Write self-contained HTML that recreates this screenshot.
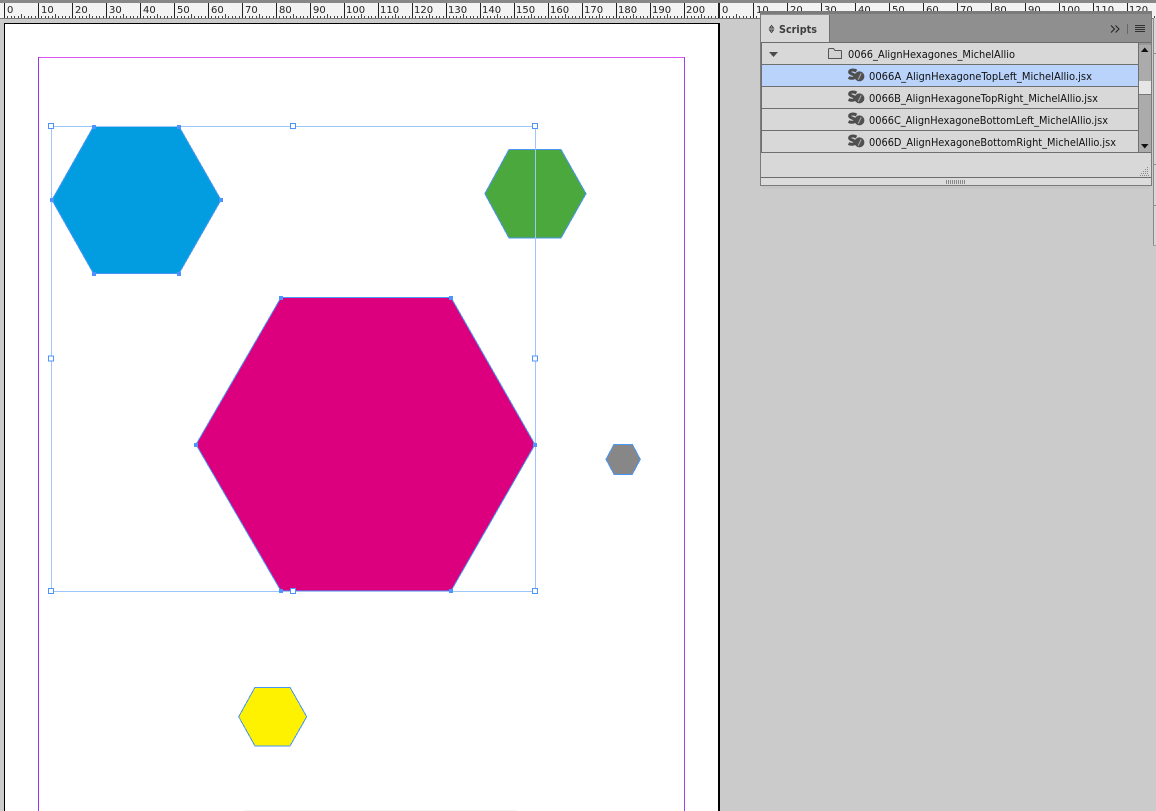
<!DOCTYPE html>
<html lang="en">
<head>
<meta charset="utf-8">
<title>Scripts</title>
<style>
html,body{margin:0;padding:0;width:1156px;height:811px;overflow:hidden;background:#cbcbcb}
svg{display:block;position:absolute;left:0;top:0}
text{font-family:"DejaVu Sans","Liberation Sans",sans-serif}
</style>
</head>
<body>
<svg width="1156" height="811" viewBox="0 0 1156 811" xmlns="http://www.w3.org/2000/svg">
<defs>
<pattern id="t1" patternUnits="userSpaceOnUse" x="4" y="3" width="34" height="15">
<rect x="0" y="0" width="1" height="15" fill="#222"/>
<g fill="#444">
<rect x="3" y="13" width="1" height="2"/><rect x="7" y="13" width="1" height="2"/>
<rect x="10" y="13" width="1" height="2"/><rect x="14" y="13" width="1" height="2"/>
<rect x="17" y="11" width="1" height="4"/><rect x="20" y="13" width="1" height="2"/>
<rect x="24" y="13" width="1" height="2"/><rect x="27" y="13" width="1" height="2"/>
<rect x="31" y="13" width="1" height="2"/>
</g>
</pattern>
<pattern id="t2" patternUnits="userSpaceOnUse" x="719" y="3" width="34" height="15">
<rect x="0" y="0" width="1" height="15" fill="#222"/>
<g fill="#444">
<rect x="3" y="13" width="1" height="2"/><rect x="7" y="13" width="1" height="2"/>
<rect x="10" y="13" width="1" height="2"/><rect x="14" y="13" width="1" height="2"/>
<rect x="17" y="11" width="1" height="4"/><rect x="20" y="13" width="1" height="2"/>
<rect x="24" y="13" width="1" height="2"/><rect x="27" y="13" width="1" height="2"/>
<rect x="31" y="13" width="1" height="2"/>
</g>
</pattern>
<g id="ico">
<path d="M8.5 2 C5.5 .4 1.8 .8 1.6 3 C1.4 5.2 7.2 5 7 7.4 C6.8 9.6 3 9.8 .6 8.4" fill="none" stroke="#4d4d4d" stroke-width="3"/>
<circle cx="11.4" cy="7.4" r="5" fill="#505050"/>
<path d="M13.2 4.4 L10.2 10.6" stroke="#a8a8a8" stroke-width="1.1" fill="none"/>
</g>
</defs>

<!-- chrome + rulers -->
<rect width="1156" height="811" fill="#cbcbcb"/>
<rect width="1156" height="3" fill="#888"/>
<rect y="3" width="1156" height="15" fill="#f3f3f3"/>
<rect y="18" width="1156" height="1" fill="#777"/>
<rect y="3" x="4" width="715" height="15" fill="url(#t1)"/>
<rect y="3" x="719" width="437" height="15" fill="url(#t2)"/>
<g font-size="10" fill="#222">
<text x="7" y="13">0</text><text x="41" y="13">10</text><text x="75" y="13">20</text><text x="109" y="13">30</text><text x="143" y="13">40</text><text x="177" y="13">50</text><text x="211" y="13">60</text><text x="245" y="13">70</text><text x="279" y="13">80</text><text x="313" y="13">90</text><text x="346" y="13">100</text><text x="380" y="13">110</text><text x="414" y="13">120</text><text x="448" y="13">130</text><text x="482" y="13">140</text><text x="516" y="13">150</text><text x="550" y="13">160</text><text x="584" y="13">170</text><text x="618" y="13">180</text><text x="652" y="13">190</text><text x="686" y="13">200</text>
<text x="722" y="13">0</text><text x="756" y="13">10</text><text x="790" y="13">20</text><text x="824" y="13">30</text><text x="858" y="13">40</text><text x="892" y="13">50</text><text x="926" y="13">60</text><text x="960" y="13">70</text><text x="994" y="13">80</text><text x="1028" y="13">90</text><text x="1061" y="13">100</text><text x="1095" y="13">110</text><text x="1129" y="13">120</text>
</g>

<!-- page -->
<rect x="4" y="23" width="716" height="788" fill="#000"/>
<rect x="5" y="24" width="713" height="787" fill="#fff"/>
<rect x="244" y="810" width="273" height="1" fill="#f3f3f3"/>

<!-- margin guides -->
<rect x="38" y="57" width="647" height="1" fill="#dd55f5"/>
<rect x="38" y="57" width="1" height="754" fill="#9933f2"/>
<rect x="684" y="57" width="1" height="754" fill="#a040f0"/>

<!-- hexagons -->
<g shape-rendering="crispEdges" stroke="#4a96f5">
<polygon points="52,200 93.5,126.5 179,126.5 221,200 179,273.5 93.5,273.5" fill="#029de0"/>
<polygon points="484.8,193.7 509,149.5 561,149.5 586,193.7 561,238 509,238" fill="#4aa83c"/>
<polygon points="196,444.5 281,297.5 451,297.5 535,444.5 451,591 281,591" fill="#dc007f"/>
<polygon points="606,459.3 614,444.3 632.3,444.3 640.3,459.3 632.3,474.3 614,474.3" fill="#878787"/>
<polygon points="238.7,716.7 255,687.3 290,687.3 306.7,716.7 290,746 255,746" fill="#fff200"/>
</g>

<!-- selection frame -->
<rect x="51.5" y="126.5" width="484" height="465" fill="none" stroke="#9fc6fb"/>
<g fill="#4d94ff">
<rect x="92" y="125" width="4" height="4"/><rect x="177" y="125" width="4" height="4"/>
<rect x="50" y="198" width="4" height="4"/><rect x="219" y="198" width="4" height="4"/>
<rect x="92" y="272" width="4" height="4"/><rect x="177" y="272" width="4" height="4"/>
<rect x="279" y="296" width="4" height="4"/><rect x="449" y="296" width="4" height="4"/>
<rect x="194" y="443" width="4" height="4"/><rect x="533" y="443" width="4" height="4"/>
<rect x="279" y="589" width="4" height="4"/><rect x="449" y="589" width="4" height="4"/>
</g>
<g fill="#fff" stroke="#4d94ff">
<rect x="48.5" y="123.5" width="5" height="5"/><rect x="290.5" y="123.5" width="5" height="5"/><rect x="532.5" y="123.5" width="5" height="5"/>
<rect x="48.5" y="356" width="5" height="5"/><rect x="532.5" y="356" width="5" height="5"/>
<rect x="48.5" y="588.5" width="5" height="5"/><rect x="290.5" y="588.5" width="5" height="5"/><rect x="532.5" y="588.5" width="5" height="5"/>
</g>

<!-- right edge behind panel -->
<rect x="1154" y="18" width="2" height="227" fill="#d8d8d8"/>
<rect x="1153" y="18" width="1" height="227" fill="#8a8a8a"/>
<rect x="1153" y="53" width="3" height="1" fill="#8a8a8a"/>
<rect x="1153" y="164" width="3" height="1" fill="#8a8a8a"/>
<rect x="1153" y="205" width="3" height="1" fill="#8a8a8a"/>
<rect x="1153" y="245" width="3" height="1" fill="#a0a0a0"/>

<!-- panel shadow -->
<rect x="762" y="186" width="388" height="3" fill="#c6c6c6"/>

<!-- panel -->
<rect x="760" y="11" width="392" height="175" fill="#7b7b7b"/>
<rect x="761" y="14" width="390" height="28" fill="#8f8f8f"/>
<rect x="761" y="15" width="68" height="28" fill="#d8d8d8"/>
<rect x="829" y="15" width="1" height="27" fill="#6f6f6f"/>
<rect x="761" y="42" width="390" height="1" fill="#6c6c6c"/>
<path d="M771.5 25.5 L769.5 28 H773.5 Z M769.5 30 H773.5 L771.5 32.5 Z" fill="none" stroke="#333" stroke-width=".9"/>
<text x="779" y="33" font-size="11" font-weight="bold" fill="#3d3d3d" textLength="38" lengthAdjust="spacingAndGlyphs">Scripts</text>

<path d="M1111 25.5 L1114.5 29 L1111 32.5 M1115.5 25.5 L1119 29 L1115.5 32.5" fill="none" stroke="#222" stroke-width="1"/>
<rect x="1127" y="24" width="1" height="10" fill="#666"/>
<g fill="#333">
<rect x="1135" y="25" width="10" height="1"/><rect x="1135" y="27" width="10" height="1"/><rect x="1135" y="29" width="10" height="1"/><rect x="1135" y="31" width="10" height="1"/>
</g>

<!-- list -->
<rect x="761" y="43" width="390" height="142" fill="#d8d8d8"/>
<rect x="762" y="65" width="377" height="22" fill="#b9d3fa"/>
<g fill="#6f6f6f">
<rect x="761" y="64" width="378" height="1"/>
<rect x="761" y="86" width="378" height="1"/>
<rect x="761" y="108" width="378" height="1"/>
<rect x="761" y="130" width="378" height="1"/>
<rect x="761" y="152" width="390" height="1"/>
<rect x="761" y="43" width="1" height="110"/>
<rect x="1138" y="43" width="1" height="110"/>
</g>

<!-- list contents -->
<polygon points="769,52 778,52 773.5,57" fill="#4a4a4a"/>
<path d="M828.5 58.5 V49.5 Q828.5 48.5 829.5 48.5 H833.5 L835 50.5 H841 Q841.5 50.5 841.5 51.5 V58.5 Z" fill="#d2d2d2" stroke="#555"/>
<g font-size="11" fill="#111">
<text x="848" y="58" textLength="167" lengthAdjust="spacingAndGlyphs">0066_AlignHexagones_MichelAllio</text>
<text x="869" y="80" textLength="223" lengthAdjust="spacingAndGlyphs">0066A_AlignHexagoneTopLeft_MichelAllio.jsx</text>
<text x="869" y="102" textLength="229" lengthAdjust="spacingAndGlyphs">0066B_AlignHexagoneTopRight_MichelAllio.jsx</text>
<text x="869" y="124" textLength="239" lengthAdjust="spacingAndGlyphs">0066C_AlignHexagoneBottomLeft_MichelAllio.jsx</text>
<text x="869" y="146" textLength="247" lengthAdjust="spacingAndGlyphs">0066D_AlignHexagoneBottomRight_MichelAllio.jsx</text>
</g>
<use href="#ico" x="848" y="69"/>
<use href="#ico" x="848" y="91"/>
<use href="#ico" x="848" y="113"/>
<use href="#ico" x="848" y="135"/>

<!-- scrollbar -->
<rect x="1139" y="43" width="12" height="109" fill="#ababab"/>
<rect x="1139" y="43" width="12" height="2" fill="#999"/>
<rect x="1139" y="81" width="12" height="13" fill="#e6e6e6"/>
<rect x="1139" y="94" width="12" height="1" fill="#777"/>
<polygon points="1141,52 1148.5,52 1144.75,47.5" fill="#111"/>
<polygon points="1141,144 1148.5,144 1144.75,148.5" fill="#111"/>

<!-- status area -->
<rect x="761" y="177" width="390" height="1" fill="#6c6c6c"/>
<rect x="761" y="178" width="390" height="7" fill="#dcdcdc"/>
<g fill="#8a8a8a">
<rect x="1147" y="167" width="1" height="1"/>
<rect x="1145" y="169" width="1" height="1"/><rect x="1147" y="169" width="1" height="1"/>
<rect x="1143" y="171" width="1" height="1"/><rect x="1145" y="171" width="1" height="1"/><rect x="1147" y="171" width="1" height="1"/>
<rect x="1141" y="173" width="1" height="1"/><rect x="1143" y="173" width="1" height="1"/><rect x="1145" y="173" width="1" height="1"/><rect x="1147" y="173" width="1" height="1"/>
<rect x="1140" y="175" width="1" height="1"/><rect x="1142" y="175" width="1" height="1"/><rect x="1144" y="175" width="1" height="1"/><rect x="1146" y="175" width="1" height="1"/><rect x="1148" y="175" width="1" height="1"/>
</g>
<g fill="#888">
<rect x="946" y="180" width="1" height="4"/><rect x="948" y="180" width="1" height="4"/><rect x="950" y="180" width="1" height="4"/><rect x="952" y="180" width="1" height="4"/><rect x="954" y="180" width="1" height="4"/><rect x="956" y="180" width="1" height="4"/><rect x="958" y="180" width="1" height="4"/><rect x="960" y="180" width="1" height="4"/><rect x="962" y="180" width="1" height="4"/><rect x="964" y="180" width="1" height="4"/>
</g>
</svg>
</body>
</html>
